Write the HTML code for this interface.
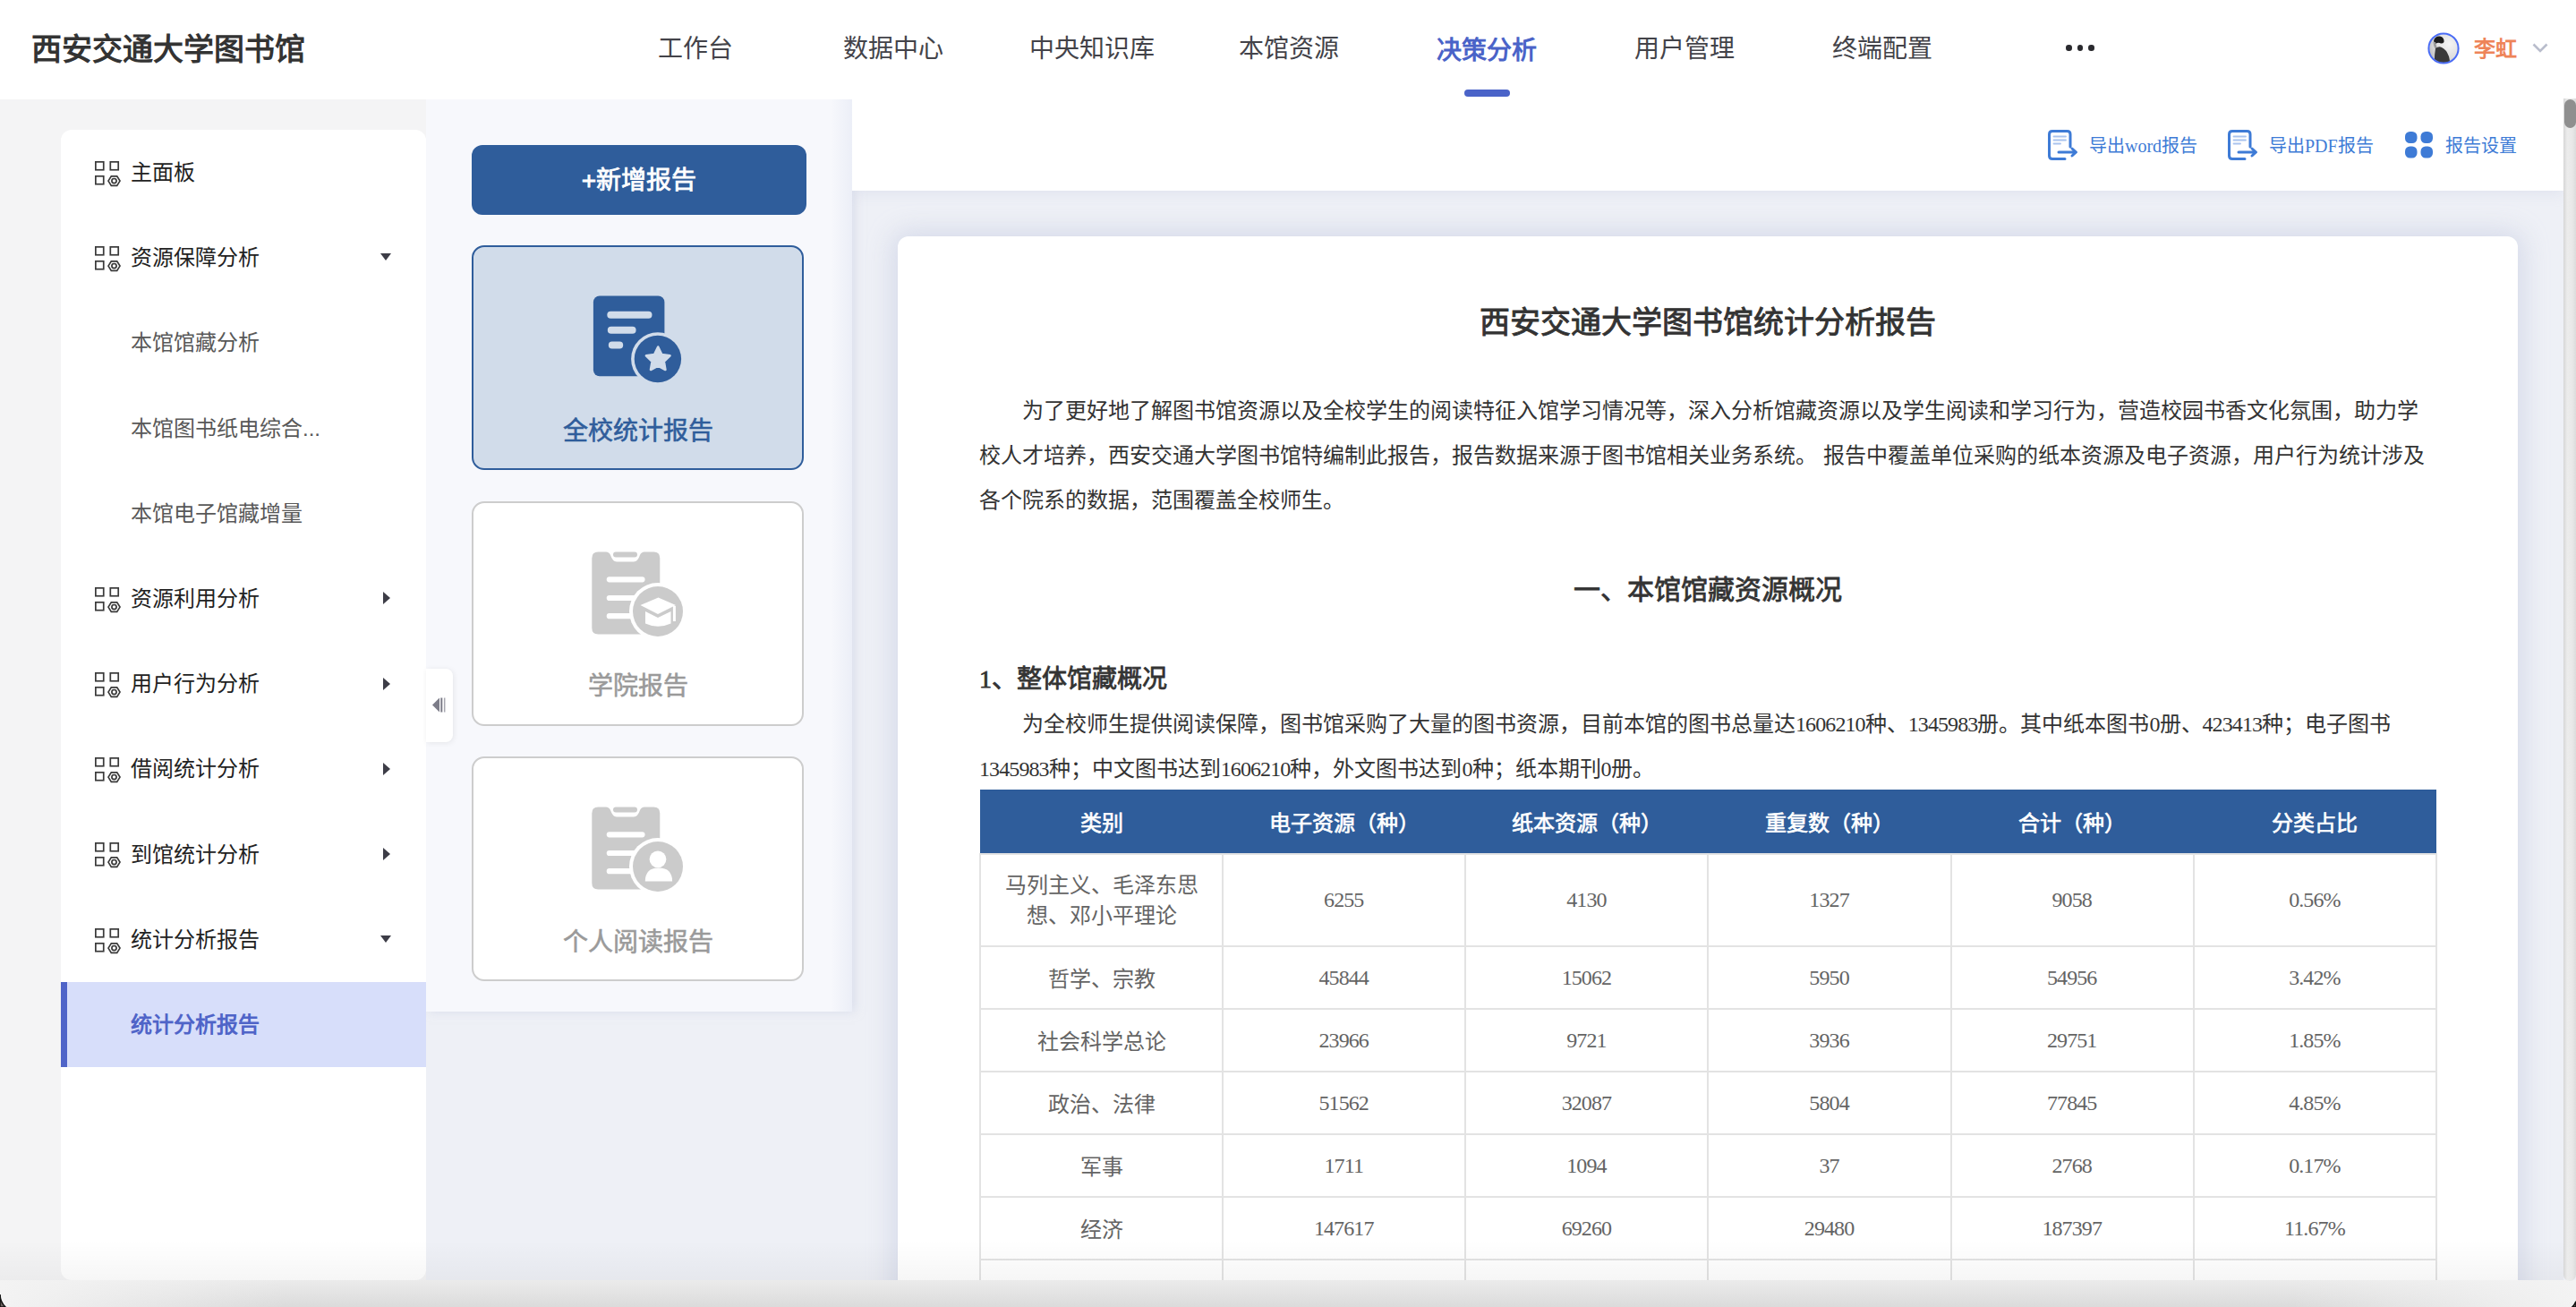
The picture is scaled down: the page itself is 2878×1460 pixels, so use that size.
<!DOCTYPE html>
<html lang="zh-CN">
<head>
<meta charset="utf-8">
<style>
*{box-sizing:border-box;margin:0;padding:0}
html,body{width:2878px;height:1460px;overflow:hidden;background:#eef0f6}
body{position:relative;font-family:"Liberation Sans",sans-serif;color:#333}
.a{position:absolute}
.t{position:absolute;white-space:nowrap}
.serif{font-family:"Liberation Serif",serif}
.dg{letter-spacing:-0.9px}
/* header */
#hdr{left:0;top:0;width:2878px;height:111px;background:#fff}
.nav{font-size:28px;line-height:40px;color:#434349;top:35px}
/* left */
#leftbg{left:0;top:111px;width:476px;height:1319px;background:#f4f4f5}
#side{left:68px;top:145px;width:408px;height:1285px;background:#fff;border-radius:12px;overflow:hidden}
.mi{position:absolute;left:78px;font-size:24px;line-height:40px;color:#222;white-space:nowrap}
.mi.sub{color:#585858}
.ico{position:absolute;left:37.5px;width:30px;height:30px}
.tri-d{position:absolute;left:357px;width:0;height:0;border-left:6.5px solid transparent;border-right:6.5px solid transparent;border-top:8px solid #3d3d47}
.tri-r{position:absolute;left:360px;width:0;height:0;border-top:7px solid transparent;border-bottom:7px solid transparent;border-left:8.5px solid #3d3d47}
/* cards panel */
#cpanel{left:476px;top:111px;width:476px;height:1019px;background:linear-gradient(90deg,rgba(228,232,244,0) 452px,rgba(228,232,244,.6) 476px),#f7f8fc;box-shadow:3px 0 10px rgba(200,206,226,.55);clip-path:inset(0 -30px -30px 0)}
#btn{left:527px;top:162px;width:374px;height:78px;background:#2f5d9b;border-radius:12px;color:#fff;font-size:28px;-webkit-text-stroke:0.8px #fff;line-height:80px;text-align:center}
.card{position:absolute;left:527px;width:371px;height:251px;border-radius:14px;background:#fff;border:2px solid #cdcdcd}
.card .lbl{position:absolute;left:0;right:0;text-align:center;font-size:28px;line-height:40px;color:#9a9a9a;-webkit-text-stroke:0.6px currentColor}
#tab{left:476px;top:747px;width:30px;height:82px;background:#fff;border-radius:0 8px 8px 0;box-shadow:1px 1px 6px rgba(0,0,0,.08)}
/* toolbar */
#tbar{z-index:3;left:952px;top:110px;width:1912px;height:103px;background:#fff;box-shadow:0 3px 14px rgba(205,210,228,.42);clip-path:inset(0 0 -40px 0)}
.tl{font-size:20px;line-height:30px;color:#3e7bd6;top:148px;z-index:4}
/* report */
#rep{left:1003px;top:264px;width:1810px;height:1250px;background:#fff;border-radius:12px;box-shadow:0 0 28px 6px rgba(205,211,230,.75)}
.rp{position:absolute;left:91px;width:1640px;font-size:24px;line-height:50px;color:#333;white-space:nowrap}
table{position:absolute;left:91px;top:618px;width:1629px;border-collapse:collapse;table-layout:fixed;font-size:24px}
th{background:#2f5d9b;color:#fff;font-weight:normal;-webkit-text-stroke:0.7px #fff;height:72px;text-align:center;border:0}
td{border:2px solid #e3e3e3;text-align:center;color:#646464;height:70px;line-height:34px;padding-top:4px}
td.n{font-family:"Liberation Serif",serif;padding-top:0;padding-bottom:1px;letter-spacing:-0.9px;text-indent:-1px}
/* scrollbar */
#sb{z-index:5;left:2864px;top:110px;width:14px;height:1321px;border-radius:0 0 7px 7px;background:linear-gradient(90deg,#d6d6d6,#ececec 30%,#e8e8e8 70%,#dcdcdc)}
#thumb{z-index:5;left:2865px;top:111px;width:13px;height:32px;background:#8f8f8f;border-radius:7px}
#bot{left:0;top:1430px;width:2878px;height:30px;background:linear-gradient(90deg,#f3f3f3 0,rgba(243,243,243,0) 320px,rgba(243,243,243,0) 2560px,#f3f3f3 100%),linear-gradient(#ebebeb,#dbdbdb)}
</style>
</head>
<body>
<!-- content bg -->
<div class="a" style="left:476px;top:110px;width:2388px;height:1320px;background:#eef0f6"></div>

<!-- report card -->
<div id="rep" class="a">
  <div class="t" style="left:0;width:1810px;text-align:center;top:72px;font-size:34px;line-height:48px;-webkit-text-stroke:0.9px #333;color:#333">西安交通大学图书馆统计分析报告</div>
  <div class="rp" style="top:170px">　　为了更好地了解图书馆资源以及全校学生的阅读特征入馆学习情况等，深入分析馆藏资源以及学生阅读和学习行为，营造校园书香文化氛围，助力学<br>校人才培养，西安交通大学图书馆特编制此报告，报告数据来源于图书馆相关业务系统。 报告中覆盖单位采购的纸本资源及电子资源，用户行为统计涉及<br>各个院系的数据，范围覆盖全校师生。</div>
  <div class="t" style="left:0;width:1810px;text-align:center;top:375px;font-size:30px;line-height:40px;-webkit-text-stroke:0.8px #333;color:#333">一、本馆馆藏资源概况</div>
  <div class="t" style="left:91px;top:475px;font-size:28px;line-height:40px;-webkit-text-stroke:0.8px #333;color:#333"><span class="serif">1</span>、整体馆藏概况</div>
  <div class="rp serif" style="top:520px">　　为全校师生提供阅读保障，图书馆采购了大量的图书资源，目前本馆的图书总量达<span class="dg">1606210</span>种、<span class="dg">1345983</span>册。其中纸本图书<span class="dg">0</span>册、<span class="dg">423413</span>种；电子图书<br><span class="dg">1345983</span>种；中文图书达到<span class="dg">1606210</span>种，外文图书达到<span class="dg">0</span>种；纸本期刊<span class="dg">0</span>册。</div>
  <table>
    <tr><th>类别</th><th>电子资源（种）</th><th>纸本资源（种）</th><th>重复数（种）</th><th>合计（种）</th><th>分类占比</th></tr>
    <tr style="height:103px"><td style="padding:0 20px">马列主义、毛泽东思想、邓小平理论</td><td class="n">6255</td><td class="n">4130</td><td class="n">1327</td><td class="n">9058</td><td class="n">0.56%</td></tr>
    <tr><td>哲学、宗教</td><td class="n">45844</td><td class="n">15062</td><td class="n">5950</td><td class="n">54956</td><td class="n">3.42%</td></tr>
    <tr><td>社会科学总论</td><td class="n">23966</td><td class="n">9721</td><td class="n">3936</td><td class="n">29751</td><td class="n">1.85%</td></tr>
    <tr><td>政治、法律</td><td class="n">51562</td><td class="n">32087</td><td class="n">5804</td><td class="n">77845</td><td class="n">4.85%</td></tr>
    <tr><td>军事</td><td class="n">1711</td><td class="n">1094</td><td class="n">37</td><td class="n">2768</td><td class="n">0.17%</td></tr>
    <tr><td>经济</td><td class="n">147617</td><td class="n">69260</td><td class="n">29480</td><td class="n">187397</td><td class="n">11.67%</td></tr>
    <tr><td></td><td></td><td></td><td></td><td></td><td></td></tr>
  </table>
</div>

<!-- toolbar -->
<div id="tbar" class="a"></div>

<!-- header -->
<div id="hdr" class="a"></div>
<div class="t" style="left:35px;top:30px;font-size:34px;line-height:50px;font-weight:bold;color:#333">西安交通大学图书馆</div>
<div class="t nav" style="left:735px">工作台</div>
<div class="t nav" style="left:942px">数据中心</div>
<div class="t nav" style="left:1150px">中央知识库</div>
<div class="t nav" style="left:1384px">本馆资源</div>
<div class="t nav" style="left:1605px;top:37px;color:#4a63c8;font-weight:bold">决策分析</div>
<div class="t nav" style="left:1826px">用户管理</div>
<div class="t nav" style="left:2047px">终端配置</div>
<div class="a" style="left:1636px;top:100px;width:51px;height:8px;border-radius:4px;background:#4a63c8"></div>

<!-- left -->
<div id="leftbg" class="a"></div>
<div id="side" class="a">
<div class="mi" style="top:28px">主面板</div>
<svg class="ico" style="top:34.8px" viewBox="0 0 30 30" fill="none" stroke="#3a3a3a" stroke-width="1.7"><rect x="0.85" y="0.85" width="8.9" height="8.9"/><rect x="17.3" y="0.85" width="8.9" height="8.9"/><rect x="0.85" y="16.8" width="8.9" height="8.9"/><path d="M15 22.1 L18.3 16.8 H24.7 L28 22.1 L24.7 27.4 H18.3 Z"/><circle cx="21.5" cy="22.1" r="2.6"/></svg>
<div class="mi" style="top:123px">资源保障分析</div>
<svg class="ico" style="top:130.0px" viewBox="0 0 30 30" fill="none" stroke="#3a3a3a" stroke-width="1.7"><rect x="0.85" y="0.85" width="8.9" height="8.9"/><rect x="17.3" y="0.85" width="8.9" height="8.9"/><rect x="0.85" y="16.8" width="8.9" height="8.9"/><path d="M15 22.1 L18.3 16.8 H24.7 L28 22.1 L24.7 27.4 H18.3 Z"/><circle cx="21.5" cy="22.1" r="2.6"/></svg>
<div class="tri-d" style="top:138px"></div>
<div class="mi sub" style="top:218px">本馆馆藏分析</div>
<div class="mi sub" style="top:314px">本馆图书纸电综合...</div>
<div class="mi sub" style="top:409px">本馆电子馆藏增量</div>
<div class="mi" style="top:504px">资源利用分析</div>
<svg class="ico" style="top:510.8px" viewBox="0 0 30 30" fill="none" stroke="#3a3a3a" stroke-width="1.7"><rect x="0.85" y="0.85" width="8.9" height="8.9"/><rect x="17.3" y="0.85" width="8.9" height="8.9"/><rect x="0.85" y="16.8" width="8.9" height="8.9"/><path d="M15 22.1 L18.3 16.8 H24.7 L28 22.1 L24.7 27.4 H18.3 Z"/><circle cx="21.5" cy="22.1" r="2.6"/></svg>
<div class="tri-r" style="top:516px"></div>
<div class="mi" style="top:599px">用户行为分析</div>
<svg class="ico" style="top:606.0px" viewBox="0 0 30 30" fill="none" stroke="#3a3a3a" stroke-width="1.7"><rect x="0.85" y="0.85" width="8.9" height="8.9"/><rect x="17.3" y="0.85" width="8.9" height="8.9"/><rect x="0.85" y="16.8" width="8.9" height="8.9"/><path d="M15 22.1 L18.3 16.8 H24.7 L28 22.1 L24.7 27.4 H18.3 Z"/><circle cx="21.5" cy="22.1" r="2.6"/></svg>
<div class="tri-r" style="top:612px"></div>
<div class="mi" style="top:694px">借阅统计分析</div>
<svg class="ico" style="top:701.2px" viewBox="0 0 30 30" fill="none" stroke="#3a3a3a" stroke-width="1.7"><rect x="0.85" y="0.85" width="8.9" height="8.9"/><rect x="17.3" y="0.85" width="8.9" height="8.9"/><rect x="0.85" y="16.8" width="8.9" height="8.9"/><path d="M15 22.1 L18.3 16.8 H24.7 L28 22.1 L24.7 27.4 H18.3 Z"/><circle cx="21.5" cy="22.1" r="2.6"/></svg>
<div class="tri-r" style="top:707px"></div>
<div class="mi" style="top:790px">到馆统计分析</div>
<svg class="ico" style="top:796.4px" viewBox="0 0 30 30" fill="none" stroke="#3a3a3a" stroke-width="1.7"><rect x="0.85" y="0.85" width="8.9" height="8.9"/><rect x="17.3" y="0.85" width="8.9" height="8.9"/><rect x="0.85" y="16.8" width="8.9" height="8.9"/><path d="M15 22.1 L18.3 16.8 H24.7 L28 22.1 L24.7 27.4 H18.3 Z"/><circle cx="21.5" cy="22.1" r="2.6"/></svg>
<div class="tri-r" style="top:802px"></div>
<div class="mi" style="top:885px">统计分析报告</div>
<svg class="ico" style="top:891.6px" viewBox="0 0 30 30" fill="none" stroke="#3a3a3a" stroke-width="1.7"><rect x="0.85" y="0.85" width="8.9" height="8.9"/><rect x="17.3" y="0.85" width="8.9" height="8.9"/><rect x="0.85" y="16.8" width="8.9" height="8.9"/><path d="M15 22.1 L18.3 16.8 H24.7 L28 22.1 L24.7 27.4 H18.3 Z"/><circle cx="21.5" cy="22.1" r="2.6"/></svg>
<div class="tri-d" style="top:900px"></div>
<div class="a" style="left:0;top:952px;width:408px;height:95px;background:#d7defa"></div>
<div class="a" style="left:0;top:952px;width:7px;height:95px;background:#4f64c8"></div>
<div class="mi" style="top:980px;color:#4f64c8;font-weight:bold">统计分析报告</div>
</div>

<!-- cards panel -->
<div id="cpanel" class="a"></div>
<div id="btn" class="a">+新增报告</div>
<div class="card" style="top:274px;background:#d1dcea;border-color:#2f5d9b"><div class="lbl" style="top:186px;color:#2f5d9b">全校统计报告</div></div>
<div class="card" style="top:560px"><div class="lbl" style="top:185px">学院报告</div></div>
<div class="card" style="top:845px"><div class="lbl" style="top:186px">个人阅读报告</div></div>
<div id="tab" class="a"></div>


<!-- more dots -->
<div class="a" style="left:2308px;top:50px;width:6.5px;height:6.5px;border-radius:50%;background:#2a2a2e"></div>
<div class="a" style="left:2320.5px;top:50px;width:6.5px;height:6.5px;border-radius:50%;background:#2a2a2e"></div>
<div class="a" style="left:2333px;top:50px;width:6.5px;height:6.5px;border-radius:50%;background:#2a2a2e"></div>
<!-- user -->
<svg class="a" style="left:2712px;top:36px" width="36" height="36" viewBox="0 0 36 36">
  <defs><radialGradient id="ag" cx="0.7" cy="0.35" r="0.8"><stop offset="0" stop-color="#f4f4f4"/><stop offset="0.6" stop-color="#dedede"/><stop offset="1" stop-color="#bdbdbd"/></radialGradient>
  <clipPath id="ac"><circle cx="18" cy="18" r="16"/></clipPath></defs>
  <circle cx="18" cy="18" r="16" fill="url(#ag)"/>
  <g clip-path="url(#ac)">
    <path d="M7 10 Q8 4 14 4.5 Q19 5.5 18.5 11 Q17 13 15 12.5 Q12 11 9 13 Z" fill="#1c1c1c"/>
    <path d="M6.5 11 Q7 17 9.5 19 L11 18 Q9.5 14 9 11 Z" fill="#9a9a9a"/>
    <path d="M9 18 Q13 15 16 17 Q21 19 24 27 Q25 31 25.5 36 H8 Q7.5 27 9 18 Z" fill="#3a3a3a"/>
  </g>
  <circle cx="18" cy="18" r="16.6" fill="none" stroke="#4a6cf5" stroke-width="2"/>
</svg>
<div class="t" style="left:2764px;top:35px;font-size:24px;line-height:40px;font-weight:bold;color:#ee8459">李虹</div>
<svg class="a" style="left:2828px;top:47px" width="20" height="14" viewBox="0 0 20 14"><path d="M2.5 2.5 L10 10 L17.5 2.5" fill="none" stroke="#b9bdcc" stroke-width="2.6"/></svg>
<!-- toolbar links -->
<svg class="a" style="z-index:4;left:2288px;top:145px" width="36" height="35" viewBox="0 0 36 35" fill="none" stroke="#3e7bd6" stroke-width="3" stroke-linecap="round" stroke-linejoin="round">
  <path d="M19 32.5 H5 Q1.5 32.5 1.5 29 V5 Q1.5 1.5 5 1.5 H21.5 Q25 1.5 25 5 V19"/>
  <path d="M12 25 H31 M27 21 L31.5 25 L27 29"/>
  <path d="M6.5 7.5 H20 M6.5 11.5 H20 M6.5 15.5 H14" stroke-width="1.8" stroke="#a9c3ee"/>
</svg>
<div class="t tl" style="left:2334px">导出<span class="serif">word</span>报告</div>
<svg class="a" style="z-index:4;left:2489px;top:145px" width="36" height="35" viewBox="0 0 36 35" fill="none" stroke="#3e7bd6" stroke-width="3" stroke-linecap="round" stroke-linejoin="round">
  <path d="M19 32.5 H5 Q1.5 32.5 1.5 29 V5 Q1.5 1.5 5 1.5 H21.5 Q25 1.5 25 5 V19"/>
  <path d="M12 25 H31 M27 21 L31.5 25 L27 29"/>
  <path d="M6.5 7.5 H20 M6.5 11.5 H20 M6.5 15.5 H14" stroke-width="1.8" stroke="#a9c3ee"/>
</svg>
<div class="t tl" style="left:2535px">导出<span class="serif">PDF</span>报告</div>
<svg class="a" style="z-index:4;left:2687px;top:147px" width="31" height="30" viewBox="0 0 31 30" fill="#3e7bd6">
  <rect x="0" y="0" width="13.5" height="13" rx="5.5"/><rect x="17.5" y="0" width="13.5" height="13" rx="5.5"/>
  <rect x="0" y="16.5" width="13.5" height="13" rx="5.5"/><rect x="17.5" y="16.5" width="13.5" height="13" rx="5.5"/>
</svg>
<div class="t tl" style="left:2732px">报告设置</div>
<!-- card icons -->
<svg class="a" style="left:655px;top:322px" width="115" height="115" viewBox="0 0 115 115">
  <rect x="7.9" y="8.4" width="79.5" height="89.9" rx="7" fill="#2f5d9b"/>
  <path d="M27.3 29.8 H69.5 M27.8 46.7 H51.6 M28.8 63.6 H37.2" stroke="#d1dcea" stroke-width="8" stroke-linecap="round"/>
  <circle cx="79.9" cy="79" r="29.8" fill="#d1dcea"/>
  <circle cx="79.9" cy="79" r="26.2" fill="#2f5d9b"/>
  <path d="M80.2 65.5 L84.3 74 L93.5 75.3 L86.8 81.8 L88.4 91 L80.2 86.6 L72 91 L73.6 81.8 L66.9 75.3 L76.1 74 Z" fill="#d1dcea" stroke="#d1dcea" stroke-width="2.6" stroke-linejoin="round"/>
</svg>
<svg class="a" style="left:655px;top:610px" width="115" height="110" viewBox="0 0 115 110">
  <path d="M13.3 6.5 H22 Q25.5 6.5 27 10 Q29.5 17.5 34 17.5 H53 Q57.5 17.5 60 10 Q61.5 6.5 65 6.5 H75.3 Q82.3 6.5 82.3 13.5 V91.4 Q82.3 98.4 75.3 98.4 H13.3 Q6.3 98.4 6.3 91.4 V13.5 Q6.3 6.5 13.3 6.5 Z" fill="#cbcbcb"/><path d="M33 9.5 H54" stroke="#cbcbcb" stroke-width="6" stroke-linecap="round"/><path d="M25.8 37.3 H62.5 M25.8 58 H62.5 M25.8 78.2 H62.5" stroke="#fff" stroke-width="6.2" stroke-linecap="round"/><circle cx="80" cy="73" r="32" fill="#fff"/><circle cx="80" cy="73" r="28" fill="#cbcbcb"/>
  <path d="M60.5 66 L80.5 57.5 L100 66 L80 76 Z" fill="#fff"/>
  <path d="M66 73 L80 80 L94.5 73 V86.5 Q80 93 66 86.5 Z" fill="#fff"/>
  <path d="M98.4 67 V84" stroke="#fff" stroke-width="3"/>
</svg>
<svg class="a" style="left:655px;top:895px" width="115" height="110" viewBox="0 0 115 110">
  <path d="M13.3 6.5 H22 Q25.5 6.5 27 10 Q29.5 17.5 34 17.5 H53 Q57.5 17.5 60 10 Q61.5 6.5 65 6.5 H75.3 Q82.3 6.5 82.3 13.5 V91.4 Q82.3 98.4 75.3 98.4 H13.3 Q6.3 98.4 6.3 91.4 V13.5 Q6.3 6.5 13.3 6.5 Z" fill="#cbcbcb"/><path d="M33 9.5 H54" stroke="#cbcbcb" stroke-width="6" stroke-linecap="round"/><path d="M25.8 37.3 H62.5 M25.8 58 H62.5 M25.8 78.2 H62.5" stroke="#fff" stroke-width="6.2" stroke-linecap="round"/><circle cx="80" cy="73" r="32" fill="#fff"/><circle cx="80" cy="73" r="28" fill="#cbcbcb"/>
  <circle cx="80" cy="64.8" r="9.4" fill="#fff"/>
  <path d="M65.8 89.6 Q65.8 74.5 80.9 74.5 Q96.1 74.5 96.1 89.6 Z" fill="#fff"/>
</svg>
<!-- tab icon -->
<svg class="a" style="left:482px;top:778px" width="18" height="20" viewBox="0 0 18 20">
  <path d="M1 9.5 L9 1.5 V17.5 Z" fill="#7c7c88"/>
  <path d="M11.3 1.5 V17.5" stroke="#7c7c88" stroke-width="2"/>
  <path d="M14.7 1.5 V17.5" stroke="#a7a7b0" stroke-width="1.5"/>
</svg>

<!-- scrollbar + bottom -->
<div id="sb" class="a"></div>
<div id="thumb" class="a"></div>
<div id="bot" class="a"></div>
<div class="a" style="left:0;top:1385px;width:2864px;height:45px;background:linear-gradient(rgba(0,0,0,0),rgba(0,0,0,.035))"></div>
<svg class="a" style="left:0;top:1440px" width="2878" height="20" viewBox="0 1440 2878 20">
<path d="M0 1446 A19.3 19.3 0 0 0 6 1460 L0 1460 Z" fill="#6d6360" stroke="#111" stroke-width="1.6"/>
<path d="M2878 1453.7 A19.3 19.3 0 0 1 2873.8 1460 L2878 1460 Z" fill="#6d6360" stroke="#111" stroke-width="1.6"/>
</svg>

</body>
</html>
